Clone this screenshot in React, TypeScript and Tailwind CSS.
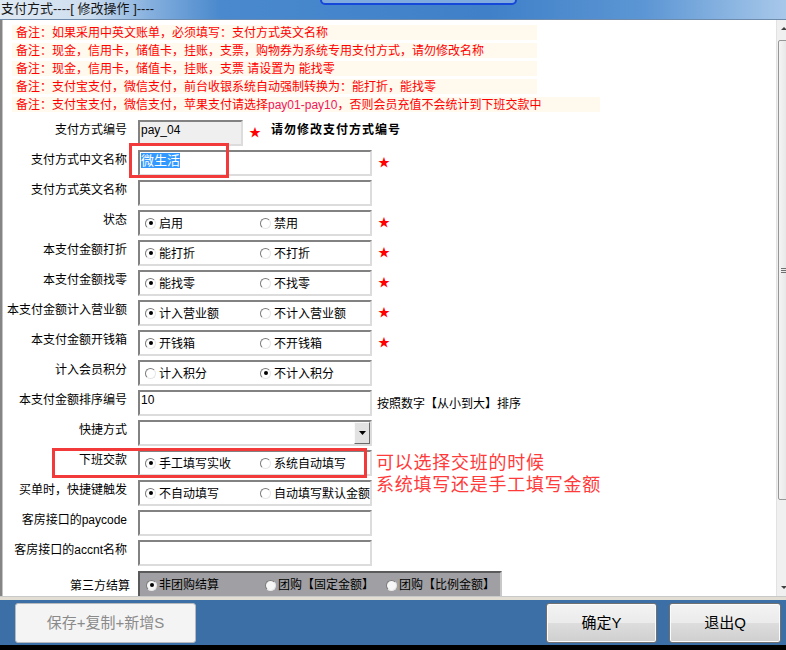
import React from "react";

function Radio({ on, grey }: { on?: boolean; grey?: boolean }) {
  return (
    <span
      className={`flex h-[11px] w-[11px] shrink-0 items-center justify-center rounded-full border border-t-[#7a7a7a] border-l-[#7a7a7a] border-r-[#e6e6e6] border-b-[#e6e6e6] ${
        grey ? "bg-[#f6f6f6]" : "bg-white"
      }`}
    >
      {on && <span className="h-[4px] w-[4px] rounded-full bg-black" />}
    </span>
  );
}

function Star() {
  return (
    <span className="ml-[6px] flex h-[26px] items-center text-[12px] leading-none text-[#ff0000]">
      ★
    </span>
  );
}

function Row({ label, children }: { label: React.ReactNode; children: React.ReactNode }) {
  return (
    <div className="flex h-[30px] items-start">
      <div className="w-[124px] shrink-0 whitespace-nowrap pt-[2px] text-right leading-[16px]">{label}</div>
      <div className="ml-[11px] flex items-start">{children}</div>
    </div>
  );
}

function TextBox({ children, short, grey }: { children?: React.ReactNode; short?: boolean; grey?: boolean }) {
  return (
    <div
      className={`h-[26px] border-2 border-t-[#828282] border-l-[#828282] border-r-[#dcdcdc] border-b-[#dcdcdc] pl-[1px] pt-[1px] leading-[15px] ${
        short ? "w-[105px]" : "w-[234px]"
      } ${grey ? "bg-[#efefef]" : "bg-white"}`}
    >
      {children}
    </div>
  );
}

function RadioBox({ a, b, sel }: { a: string; b: string; sel: number }) {
  return (
    <div className="flex h-[26px] w-[234px] items-center border-2 border-t-[#828282] border-l-[#828282] border-r-[#dcdcdc] border-b-[#dcdcdc] bg-white pl-[5px]">
      <div className="flex w-[115px] items-center gap-[3px] whitespace-nowrap leading-[16px]">
        <Radio on={sel === 0} />
        <span className="pt-[2px]">{a}</span>
      </div>
      <div className="flex items-center gap-[3px] whitespace-nowrap leading-[16px]">
        <Radio on={sel === 1} />
        <span className="pt-[2px]">{b}</span>
      </div>
    </div>
  );
}

const notes = [
  "备注：如果采用中英文账单，必须填写：支付方式英文名称",
  "备注：现金，信用卡，储值卡，挂账，支票，购物券为系统专用支付方式，请勿修改名称",
  "备注：现金，信用卡，储值卡，挂账，支票 请设置为 能找零",
  "备注：支付宝支付，微信支付，前台收银系统自动强制转换为：能打折，能找零",
];

export default function App() {
  return (
    <div className="relative flex h-[650px] w-[786px] flex-col overflow-hidden bg-white font-['Liberation_Sans','Noto_Sans_CJK_SC',sans-serif] text-[12px] text-black">
      {/* title bar */}
      <div className="relative flex h-[20px] shrink-0 items-start border-b border-[#6f8bab] bg-[linear-gradient(to_right,#dfe9f3_0%,#cfdff0_11%,#86b0de_19%,#4a89cd_28%,#3f80c8_62%,#5c96d4_82%,#a8c8ea_100%)] pl-[1px]">
        <span className="whitespace-nowrap text-[13px] leading-[17px] text-[#151515]">支付方式----[ 修改操作 ]----</span>
        <div className="absolute left-[320px] top-[-5px] h-[10px] w-[197px] rounded-[6px] border-2 border-[#1548d8] bg-[#7fabe0]" />
      </div>

      {/* content */}
      <div className="flex h-[576px] shrink-0">
        <div className="w-[3px] shrink-0 border-r border-[#c4c4c4] bg-[#858585]" />
        <div className="flex flex-1 flex-col overflow-hidden">
          <div className="flex flex-col gap-[3px] pl-[9px] pt-[5px]">
            {notes.map((n) => (
              <div key={n} className="h-[15px] w-[525px] whitespace-nowrap bg-[#fff9ee] pl-[4px] pt-[1px] leading-[15px] text-[#ff0000]">
                {n}
              </div>
            ))}
            <div className="h-[15px] w-[588px] whitespace-nowrap bg-[#fff9ee] pl-[4px] pt-[1px] leading-[15px] text-[#ff0000]">
              备注：支付宝支付，微信支付，苹果支付请选择<span className="text-[#f0165a]">pay01-pay10</span>，否则会员充值不会统计到下班交款中
            </div>
          </div>

          <div className="mt-[8px] flex flex-col">
            <Row label="支付方式编号">
              <TextBox short grey>
                pay_04
              </TextBox>
              <Star />
              <span className="ml-[10px] whitespace-nowrap pt-[2px] font-bold leading-[16px] tracking-[1px]">请勿修改支付方式编号</span>
            </Row>
            <Row label="支付方式中文名称">
              <TextBox>
                <span className="inline-block bg-[#3399ff] text-[13px] leading-[15px] text-white">微生活</span>
              </TextBox>
              <Star />
            </Row>
            <Row label="支付方式英文名称">
              <TextBox />
            </Row>
            <Row label="状态">
              <RadioBox a="启用" b="禁用" sel={0} />
              <Star />
            </Row>
            <Row label="本支付金额打折">
              <RadioBox a="能打折" b="不打折" sel={0} />
              <Star />
            </Row>
            <Row label="本支付金额找零">
              <RadioBox a="能找零" b="不找零" sel={0} />
              <Star />
            </Row>
            <Row label="本支付金额计入营业额">
              <RadioBox a="计入营业额" b="不计入营业额" sel={0} />
              <Star />
            </Row>
            <Row label="本支付金额开钱箱">
              <RadioBox a="开钱箱" b="不开钱箱" sel={0} />
              <Star />
            </Row>
            <Row label="计入会员积分">
              <RadioBox a="计入积分" b="不计入积分" sel={1} />
            </Row>
            <Row label="本支付金额排序编号">
              <TextBox>10</TextBox>
              <span className="ml-[5px] whitespace-nowrap pt-[6px] leading-[16px]">按照数字【从小到大】排序</span>
            </Row>
            <Row label="快捷方式">
              <div className="flex h-[26px] w-[234px] border-2 border-t-[#828282] border-l-[#828282] border-r-[#dcdcdc] border-b-[#dcdcdc] bg-white">
                <div className="flex-1" />
                <div className="flex w-[16px] items-center justify-center border border-t-[#fafafa] border-l-[#fafafa] border-r-[#6a6a6a] border-b-[#6a6a6a] bg-[#e2e2e2]">
                  <svg width="7" height="4" viewBox="0 0 7 4">
                    <path d="M0 0H7L3.5 4Z" fill="#000" />
                  </svg>
                </div>
              </div>
            </Row>
            <Row label="下班交款">
              <RadioBox a="手工填写实收" b="系统自动填写" sel={0} />
            </Row>
            <Row label="买单时，快捷键触发">
              <RadioBox a="不自动填写" b="自动填写默认金额" sel={0} />
            </Row>
            <Row label="客房接口的paycode">
              <TextBox />
            </Row>
            <Row label="客房接口的accnt名称">
              <TextBox />
            </Row>
            <div className="flex h-[30px] items-start">
              <div className="w-[127px] shrink-0 pt-[8px] text-right leading-[16px]">第三方结算</div>
              <div className="ml-[8px] mt-[1px] flex h-[28px] w-[364px] items-center border-2 border-t-[#5a5a5a] border-l-[#5a5a5a] border-r-[#c8c8c8] border-b-[#c8c8c8] bg-[#a0a0a4] pl-[6px]">
                <div className="flex w-[119px] items-center gap-[2px] whitespace-nowrap leading-[16px]">
                  <Radio on grey />
                  <span>非团购结算</span>
                </div>
                <div className="flex w-[121px] items-center gap-[2px] whitespace-nowrap leading-[16px]">
                  <Radio grey />
                  <span>团购【固定金额】</span>
                </div>
                <div className="flex items-center gap-[2px] whitespace-nowrap leading-[16px]">
                  <Radio grey />
                  <span>团购【比例金额】</span>
                </div>
              </div>
            </div>
          </div>
        </div>

        {/* scrollbar */}
        <div className="w-[10px] shrink-0 overflow-hidden border-l border-[#e2e2e2] bg-[#f0f0f0]">
          <div className="flex h-full w-[17px] flex-col">
            <div className="flex h-[17px] items-center pl-[4px]">
              <svg width="6" height="3" viewBox="0 0 6 3">
                <path d="M0 3L3 0L6 3Z" fill="#404040" />
              </svg>
            </div>
            <div className="flex-1">
              <div className="mx-[1px] mt-[3px] flex h-[460px] items-center rounded-[2px] border border-[#979797] bg-[linear-gradient(to_right,#f4f4f4,#dedede)] pl-[2px]">
                <svg width="6" height="5" viewBox="0 0 6 5">
                  <path d="M0 0.5H6M0 2.5H6M0 4.5H6" stroke="#707070" strokeWidth="1" />
                </svg>
              </div>
            </div>
            <div className="flex h-[17px] items-center pl-[4px]">
              <svg width="6" height="3" viewBox="0 0 6 3">
                <path d="M0 0H6L3 3Z" fill="#404040" />
              </svg>
            </div>
          </div>
        </div>
      </div>

      <div className="h-[4px] shrink-0 border-t border-[#c9c9c9] bg-[#e2ded4]" />

      {/* bottom bar */}
      <div className="flex h-[45px] shrink-0 items-start bg-[#3b6fa5] pt-[3px]">
        <button className="ml-[15px] h-[40px] w-[181px] rounded-[3px] border border-[#b6babd] bg-[#f4f4f4] text-[15px] text-[#8a8a8a]">
          保存+复制+新增S
        </button>
        <div className="ml-auto mr-[5px] flex gap-[12px]">
          <button className="h-[40px] w-[111px] rounded-[3px] border border-[#707070] bg-[linear-gradient(to_bottom,#f3f3f3_0%,#ebebeb_50%,#dddddd_51%,#cfcfcf_100%)] text-[15px] text-black shadow-[inset_0_0_0_1px_#fbfbfb]">
            确定Y
          </button>
          <button className="h-[40px] w-[112px] rounded-[3px] border border-[#707070] bg-[linear-gradient(to_bottom,#f3f3f3_0%,#ebebeb_50%,#dddddd_51%,#cfcfcf_100%)] text-[15px] text-black shadow-[inset_0_0_0_1px_#fbfbfb]">
            退出Q
          </button>
        </div>
      </div>
      <div className="h-[5px] shrink-0 bg-black" />

      {/* annotations */}
      <div className="absolute left-[129px] top-[143px] h-[35px] w-[100px] border-[3px] border-[#f23a3a]" />
      <div className="absolute left-[52px] top-[448px] h-[30px] w-[315px] border-[3px] border-[#f23a3a]" />
      <div className="absolute left-[376px] top-[452px] whitespace-nowrap text-[18px] leading-[22px] tracking-[0.75px] text-[#ff3a3a]">
        <div>可以选择交班的时候</div>
        <div>系统填写还是手工填写金额</div>
      </div>
    </div>
  );
}
